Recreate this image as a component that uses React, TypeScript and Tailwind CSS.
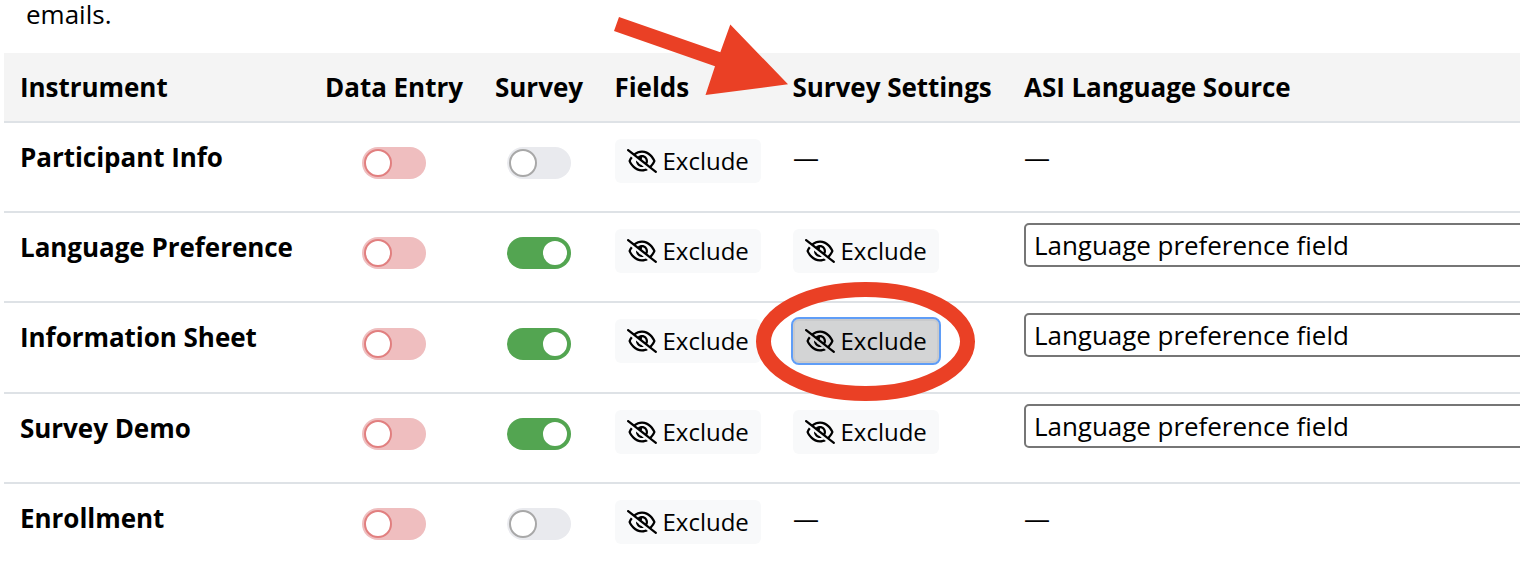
import { FaRegEyeSlash } from "react-icons/fa6";

type Row = {
  name: string;
  survey: boolean;
  height: string;
  active?: boolean;
};

const rows: Row[] = [
  { name: "Participant Info", survey: false, height: "h-[90px]" },
  { name: "Language Preference", survey: true, height: "h-[90px]" },
  { name: "Information Sheet", survey: true, height: "h-[91px]", active: true },
  { name: "Survey Demo", survey: true, height: "h-[90px]" },
  { name: "Enrollment", survey: false, height: "h-[90px]" },
];

const columns = "grid grid-cols-[305px_170px_120px_178px_231px_700px]";

function Toggle({ kind, low }: { kind: "danger" | "off" | "on"; low?: boolean }) {
  const track = kind === "danger" ? "bg-[#efbebf]" : kind === "off" ? "bg-[#e9eaee]" : "bg-[#53a551]";
  const knob =
    kind === "danger"
      ? "border-2 border-[#e17f7f]"
      : kind === "off"
        ? "border-2 border-[#a8a8a8]"
        : "border-2 border-[#53a551] ml-auto";
  return (
    <div className={`${low ? "mt-[25px]" : "mt-6"} flex h-8 w-16 items-center rounded-full px-0.5 ${track}`}>
      <div className={`size-7 rounded-full bg-white ${knob}`} />
    </div>
  );
}

function ExcludeButton({ active }: { active?: boolean }) {
  return (
    <button
      className={`mt-4 flex h-11 w-[146px] items-center gap-1.5 rounded-md pl-[11.5px] leading-none ${
        active ? "bg-[#d3d4d5] outline-2 outline-[#5f9df7] ring-2 ring-inset ring-[#c9cacc]" : "bg-[#f8f9fa]"
      }`}
    >
      <FaRegEyeSlash className="h-6 w-[30px] shrink-0" />
      <span className="text-[24px]">Exclude</span>
    </button>
  );
}

function Dash() {
  return <div className="mt-4 leading-9">—</div>;
}

export default function App() {
  return (
    <div className="relative h-[562px] w-full overflow-hidden bg-white font-['Open_Sans',sans-serif] text-[26px] text-black">
      <div className="flex h-[53px] items-start pl-[26px]">
        <p className="leading-7">emails.</p>
      </div>
      <div className="ml-1 w-[1704px]">
        <div className={`${columns} h-[70px] border-b-2 border-[#dee2e6] bg-[#f4f4f4] pt-4 font-bold leading-9 tracking-[-0.04px]`}>
          <div className="pl-4">Instrument</div>
          <div className="text-center">Data Entry</div>
          <div className="text-center">Survey</div>
          <div className="pl-[15.5px]">Fields</div>
          <div className="pl-[15.5px]">Survey Settings</div>
          <div className="pl-4">ASI Language Source</div>
        </div>
        {rows.map((row) => (
          <div key={row.name} className={`${columns} ${row.height} border-b-2 border-[#dee2e6]`}>
            <div className="pl-4 pt-4 font-bold leading-9 tracking-[-0.04px]">{row.name}</div>
            <div className="flex items-start justify-center">
              <Toggle kind="danger" low={row.active} />
            </div>
            <div className="flex items-start justify-center">
              <Toggle kind={row.survey ? "on" : "off"} low={row.active} />
            </div>
            <div className="pl-4">
              <ExcludeButton />
            </div>
            <div className="pl-4">{row.survey ? <ExcludeButton active={row.active} /> : <Dash />}</div>
            <div className="pl-4">
              {row.survey ? (
                <div className="mt-2.5 flex h-11 items-center rounded-[5px] border-2 border-[#767676] bg-white pl-2 leading-9 tracking-[-0.04px]">
                  Language preference field
                </div>
              ) : (
                <Dash />
              )}
            </div>
          </div>
        ))}
      </div>
      <svg className="pointer-events-none absolute inset-0" width="1520" height="562" viewBox="0 0 1520 562">
        <polygon points="619,17 720.3,52.3 730.3,24.5 788,84.3 705.5,95 715,66.3 614,31" fill="#ea4025" />
        <ellipse cx="865.5" cy="341.5" rx="102" ry="52" fill="none" stroke="#ea4025" strokeWidth="15" />
      </svg>
    </div>
  );
}
